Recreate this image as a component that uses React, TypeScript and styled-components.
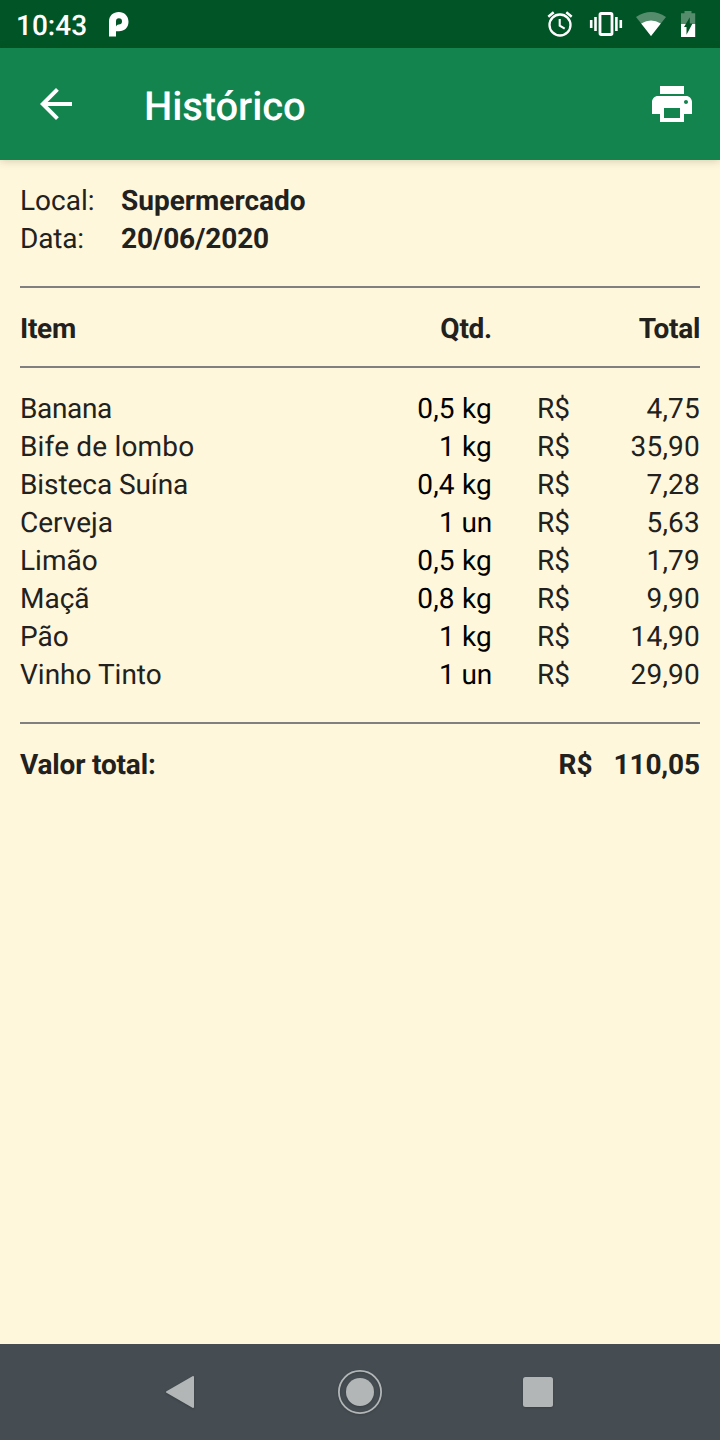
import React from 'react';
import styled, { createGlobalStyle } from 'styled-components';

const GlobalStyle = createGlobalStyle`
  * { box-sizing: border-box; }
  body {
    margin: 0;
    font-family: Roboto, "Liberation Sans", sans-serif;
    text-rendering: geometricPrecision;
  }
`;

const Screen = styled.div`
  display: flex;
  flex-direction: column;
  width: 720px;
  height: 1440px;
  background: #fff7dc;
  overflow: hidden;
`;

const StatusBar = styled.header`
  flex: none;
  display: flex;
  align-items: center;
  height: 48px;
  background: #005425;
  color: #fff;
  svg { display: block; flex: none; }
`;

const Clock = styled.span`
  width: 92px;
  padding: 3px 0 0 16px;
  font-size: 28px;
  line-height: 33px;
  font-weight: 500;
  white-space: nowrap;
`;

const StatusIcons = styled.div`
  display: flex;
  margin-left: auto;
`;

const AppBar = styled.nav`
  flex: none;
  display: flex;
  align-items: center;
  height: 112px;
  padding: 0 24px 0 32px;
  background: #14844f;
  color: #fff;
  box-shadow: 0 1px 8px rgba(60, 50, 20, 0.22);
  svg { display: block; }
`;

const Title = styled.h1`
  flex: 1;
  margin: 0 0 0 64px;
  padding-top: 6px;
  font-size: 40px;
  line-height: 48px;
  font-weight: 500;
  letter-spacing: -0.12px;
`;

const Receipt = styled.main`
  flex: 1;
  padding: 22px 20px 0;
  font-size: 28px;
  line-height: 38px;
  color: #22211d;
`;

const InfoRow = styled.div`
  display: grid;
  grid-template-columns: 101px 1fr;
`;

const Label = styled.span<{ $tracking?: number }>`
  letter-spacing: ${p => p.$tracking ?? 0}px;
`;

const InfoValue = styled(Label)`
  font-weight: 700;
`;

const Rule = styled.hr<{ $top?: number; $bottom?: number }>`
  height: 2px;
  margin: ${p => p.$top ?? 0}px 0 ${p => p.$bottom ?? 0}px;
  border: 0;
  background: #808080;
`;

const ItemRow = styled.div<{ $bold?: boolean }>`
  display: grid;
  grid-template-columns: 1fr 120px 78px 130px;
  font-weight: ${p => (p.$bold ? 700 : 400)};
`;

const Quantity = styled(Label)<{ $dark?: boolean }>`
  text-align: right;
  color: ${p => (p.$dark ? '#000' : 'inherit')};
`;

const Amount = styled(Label)`
  text-align: right;
`;

const Currency = styled.span`
  text-align: right;
`;

const TotalRow = styled.div`
  display: flex;
  font-weight: 700;
`;

const TotalLabel = styled(Label)`
  flex: 1;
`;

const TotalAmount = styled(Label)`
  margin-left: 21px;
`;

const NavBar = styled.footer`
  flex: none;
  display: flex;
  align-items: center;
  height: 96px;
  padding-left: 156px;
  background: #454d53;
  color: #b2b6b7;
  svg { display: block; filter: drop-shadow(0 1px 1px rgba(0, 0, 0, 0.2)); }
`;

const HomeButton = styled.span`
  margin: 0 130px 0 132px;
`;

const items = [
  { name: 'Banana', tracking: -0.35, quantity: '0,5 kg', price: '4,75' },
  { name: 'Bife de lombo', tracking: 0.17, quantity: '1 kg', price: '35,90' },
  { name: 'Bisteca Suína', tracking: -0.08, quantity: '0,4 kg', price: '7,28' },
  { name: 'Cerveja', tracking: 0, quantity: '1 un', price: '5,63' },
  { name: 'Limão', tracking: 0, quantity: '0,5 kg', price: '1,79' },
  { name: 'Maçã', tracking: 0, quantity: '0,8 kg', price: '9,90' },
  { name: 'Pão', tracking: 0, quantity: '1 kg', price: '14,90' },
  { name: 'Vinho Tinto', tracking: 0, quantity: '1 un', price: '29,90' },
];

const ParkingIcon = () => (
  <svg width="40" height="48" viewBox="92 0 40 48">
    <path
      fill="#fff"
      fillRule="evenodd"
      d="M109 36.500V21.500C109 15.800 113.200 12 118.800 12S128.500 16 128.500 21.700C128.500 27.400 124.500 31.200 119 31.200H116V36.500ZM116 26.500V21.300Q116 18.200 118.900 18.200Q122 18.200 122 21.300Q122 24.600 118.700 24.600Q116.700 24.600 116 26.500Z"
    />
  </svg>
);

const SystemIcons = () => (
  <svg width="180" height="48" viewBox="540 0 180 48">
    <g fill="none" stroke="#fff">
      <circle cx="560" cy="25" r="10.500" strokeWidth="2.300" />
      <path strokeWidth="2.100" d="M559.700 19v6.700l5 3" />
      <path strokeWidth="2.500" d="M548.300 16.700l5.400-4.500M566.300 12.200l5.400 4.500" />
      <rect x="600" y="13.500" width="12" height="21" rx="1.200" strokeWidth="2.800" />
      <path strokeWidth="2.600" d="M595.500 17v14M591.200 20v8M616.400 17v14M620.800 20v8" />
    </g>
    <path fill="#fff" fillOpacity=".33" d="M636 17Q651 7 666 17L651 36Z" />
    <path fill="#fff" d="M641.200 23.600Q651 17.200 660.800 23.600L651 36Z" />
    <path fill="#fff" fillOpacity=".33" d="M684.500 11h7v2.300h3.700V24H681V13.300h3.500Z" />
    <path fill="#fff" d="M681 24h14.200v13H681Z" />
    <path fill="#005425" d="M689.800 17.300V23.500h2.700l-6 11.200V27h-2.500Z" />
  </svg>
);

const BackIcon = () => (
  <svg width="48" height="48" viewBox="0 0 24 24">
    <path fill="#fff" d="M20 11H7.830l5.590-5.590L12 4l-8 8 8 8 1.410-1.410L7.830 13H20Z" />
  </svg>
);

const PrintIcon = () => (
  <svg width="48" height="48" viewBox="0 0 24 24">
    <path
      fill="#fff"
      d="M19 8H5c-1.660 0-3 1.340-3 3v6h4v4h12v-4h4v-6c0-1.660-1.340-3-3-3zm-3 11H8v-5h8v5zm3-7c-.55 0-1-.45-1-1s.45-1 1-1 1 .45 1 1-.45 1-1 1zm-1-9H6v4h12V3z"
    />
  </svg>
);

export default function App() {
  return (
    <>
      <GlobalStyle />
      <Screen>
        <StatusBar>
          <Clock>10:43</Clock>
          <ParkingIcon />
          <StatusIcons>
            <SystemIcons />
          </StatusIcons>
        </StatusBar>
        <AppBar>
          <BackIcon />
          <Title>Histórico</Title>
          <PrintIcon />
        </AppBar>
        <Receipt>
          <InfoRow>
            <Label>Local:</Label>
            <InfoValue>Supermercado</InfoValue>
          </InfoRow>
          <InfoRow>
            <Label $tracking={-0.2}>Data:</Label>
            <InfoValue $tracking={-0.13}>20/06/2020</InfoValue>
          </InfoRow>
          <Rule $top={28} $bottom={22} />
          <ItemRow $bold>
            <Label $tracking={-0.3}>Item</Label>
            <Quantity $tracking={-0.25}>Qtd.</Quantity>
            <span />
            <Amount $tracking={-0.3}>Total</Amount>
          </ItemRow>
          <Rule $top={18} $bottom={22} />
          {items.map(({ name, tracking, quantity, price }) => (
            <ItemRow key={name}>
              <Label $tracking={tracking}>{name}</Label>
              <Quantity $dark $tracking={quantity.endsWith('kg') ? 0.2 : -0.15}>{quantity}</Quantity>
              <Currency>R$</Currency>
              <Amount $tracking={0.2}>{price}</Amount>
            </ItemRow>
          ))}
          <Rule $top={28} $bottom={22} />
          <TotalRow>
            <TotalLabel $tracking={-0.18}>Valor total:</TotalLabel>
            <span>R$</span>
            <TotalAmount $tracking={-0.12}>110,05</TotalAmount>
          </TotalRow>
        </Receipt>
        <NavBar>
          <svg width="48" height="48" viewBox="156 1368 48 48">
            <path fill="currentColor" stroke="currentColor" strokeWidth="2" strokeLinejoin="round" d="M167 1392L193 1377V1407Z" />
          </svg>
          <HomeButton>
            <svg width="48" height="48" viewBox="336 1368 48 48">
              <circle cx="360" cy="1392" r="21.100" fill="none" stroke="currentColor" strokeWidth="1.800" />
              <circle cx="360" cy="1392" r="14" fill="currentColor" />
            </svg>
          </HomeButton>
          <svg width="48" height="48" viewBox="514 1368 48 48">
            <rect x="523" y="1377" width="30" height="30" rx="2.500" fill="currentColor" />
          </svg>
        </NavBar>
      </Screen>
    </>
  );
}
